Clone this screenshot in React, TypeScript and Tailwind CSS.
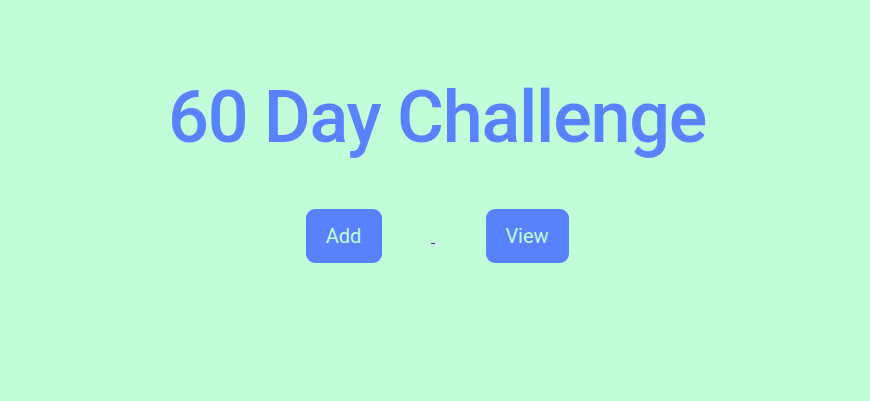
const App: React.FC = () => {
  return (
    <div className="min-h-[401px] w-full bg-[#c1fdd9] pl-[4px] pt-[76px] font-['Roboto',sans-serif]">
      <h1 className="text-center text-[72px] leading-[84px] font-medium tracking-[-1.3px] text-[#5882ff]">
        60 Day Challenge
      </h1>
      <div className="mt-[49px] flex items-center justify-center">
        <button className="h-[54px] w-[76px] rounded-[9px] bg-[#5882ff] text-[20px] text-[#c1fdd9]">
          Add
        </button>
        <span className="mt-[14px] ml-[49px] mr-[51px] h-px w-[4px] bg-[#551a8b]" />
        <button className="h-[54px] w-[83px] rounded-[9px] bg-[#5882ff] text-[20px] text-[#c1fdd9]">
          View
        </button>
      </div>
    </div>
  );
};

export default App;
